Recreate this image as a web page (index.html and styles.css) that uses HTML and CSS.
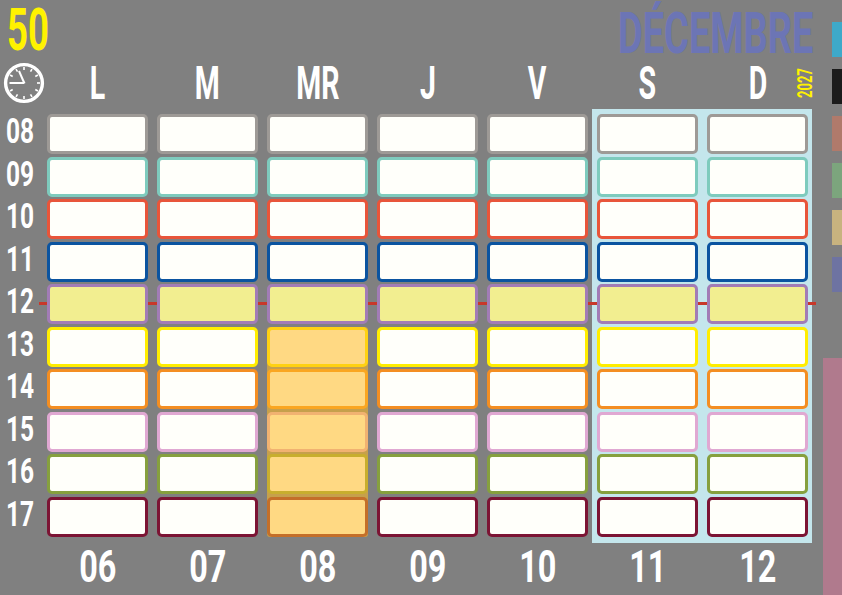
FILE: index.html
```html
<!DOCTYPE html>
<html lang="fr">
<head>
<meta charset="utf-8">
<title>Semaine 50 – Décembre 2027</title>
<link rel="stylesheet" href="styles.css">
</head>
<body>
<div class="page">
  <div class="main">
    <header class="top">
      <span class="week"><span class="sq">50</span></span>
      <span class="month"><span class="sq">DÉCEMBRE</span></span>
    </header>

    <div class="stack">
      <!-- underlay: weekend panel + noon line -->
      <div class="layer">
        <div class="weekend"></div>
        <div class="noon"></div>
      </div>

      <!-- main calendar grid -->
      <div class="cal">
        <div class="clock">
          <svg width="42" height="42" viewBox="0 0 42 42" aria-hidden="true">
            <circle cx="21" cy="21" r="18.4" fill="none" stroke="#fff" stroke-width="3.4"/>
            <g stroke="#fff" stroke-width="1.6" stroke-linecap="butt">
              <line x1="21" y1="8" x2="21" y2="5"/>
              <line x1="27.5" y1="9.7" x2="29" y2="7.1"/>
              <line x1="32.3" y1="14.5" x2="34.9" y2="13"/>
              <line x1="34" y1="21" x2="37" y2="21"/>
              <line x1="32.3" y1="27.5" x2="34.9" y2="29"/>
              <line x1="27.5" y1="32.3" x2="29" y2="34.9"/>
              <line x1="21" y1="34" x2="21" y2="37"/>
              <line x1="14.5" y1="32.3" x2="13" y2="34.9"/>
              <line x1="9.7" y1="27.5" x2="7.1" y2="29"/>
              <line x1="9.7" y1="14.5" x2="7.1" y2="13"/>
              <line x1="14.5" y1="9.7" x2="13" y2="7.1"/>
            </g>
            <line x1="21" y1="21" x2="6.5" y2="21" stroke="#fff" stroke-width="2"/>
            <line x1="21.5" y1="21.5" x2="16" y2="9" stroke="#fff" stroke-width="2"/>
          </svg>
        </div>
        <div class="day"><span class="sq">L</span></div>
        <div class="day"><span class="sq">M</span></div>
        <div class="day"><span class="sq">MR</span></div>
        <div class="day"><span class="sq">J</span></div>
        <div class="day"><span class="sq">V</span></div>
        <div class="day"><span class="sq">S</span></div>
        <div class="day"><span class="sq">D</span></div>

        <div class="row r08"><div class="hour"><span class="sq">08</span></div><div class="cell"></div><div class="cell"></div><div class="cell"></div><div class="cell"></div><div class="cell"></div><div class="cell"></div><div class="cell"></div></div>
        <div class="row r09"><div class="hour"><span class="sq">09</span></div><div class="cell"></div><div class="cell"></div><div class="cell"></div><div class="cell"></div><div class="cell"></div><div class="cell"></div><div class="cell"></div></div>
        <div class="row r10"><div class="hour"><span class="sq">10</span></div><div class="cell"></div><div class="cell"></div><div class="cell"></div><div class="cell"></div><div class="cell"></div><div class="cell"></div><div class="cell"></div></div>
        <div class="row r11"><div class="hour"><span class="sq">11</span></div><div class="cell"></div><div class="cell"></div><div class="cell"></div><div class="cell"></div><div class="cell"></div><div class="cell"></div><div class="cell"></div></div>
        <div class="row r12"><div class="hour"><span class="sq">12</span></div><div class="cell"></div><div class="cell"></div><div class="cell"></div><div class="cell"></div><div class="cell"></div><div class="cell"></div><div class="cell"></div></div>
        <div class="row r13"><div class="hour"><span class="sq">13</span></div><div class="cell"></div><div class="cell"></div><div class="cell"></div><div class="cell"></div><div class="cell"></div><div class="cell"></div><div class="cell"></div></div>
        <div class="row r14"><div class="hour"><span class="sq">14</span></div><div class="cell"></div><div class="cell"></div><div class="cell"></div><div class="cell"></div><div class="cell"></div><div class="cell"></div><div class="cell"></div></div>
        <div class="row r15"><div class="hour"><span class="sq">15</span></div><div class="cell"></div><div class="cell"></div><div class="cell"></div><div class="cell"></div><div class="cell"></div><div class="cell"></div><div class="cell"></div></div>
        <div class="row r16"><div class="hour"><span class="sq">16</span></div><div class="cell"></div><div class="cell"></div><div class="cell"></div><div class="cell"></div><div class="cell"></div><div class="cell"></div><div class="cell"></div></div>
        <div class="row r17"><div class="hour"><span class="sq">17</span></div><div class="cell"></div><div class="cell"></div><div class="cell"></div><div class="cell"></div><div class="cell"></div><div class="cell"></div><div class="cell"></div></div>

        <div class="blank"></div>
        <div class="date"><span class="sq">06</span></div>
        <div class="date"><span class="sq">07</span></div>
        <div class="date"><span class="sq">08</span></div>
        <div class="date"><span class="sq">09</span></div>
        <div class="date"><span class="sq">10</span></div>
        <div class="date"><span class="sq">11</span></div>
        <div class="date"><span class="sq">12</span></div>
      </div>

      <!-- overlay: year label + highlighted wednesday afternoon -->
      <div class="layer">
        <div class="year">2027</div>
        <div class="wed"></div>
      </div>
    </div>
  </div>

  <aside class="side">
    <div class="swatch s-blue"></div>
    <div class="swatch s-black"></div>
    <div class="swatch s-brown"></div>
    <div class="swatch s-green"></div>
    <div class="swatch s-tan"></div>
    <div class="swatch s-slate"></div>
    <div class="strip"></div>
  </aside>
</div>
</body>
</html>
```

FILE: styles.css
```css
* { box-sizing: border-box; }

html, body {
  margin: 0;
  padding: 0;
  background: #808080;
}

body {
  font-family: Roboto, "Liberation Sans", "DejaVu Sans", sans-serif;
  font-weight: 700;
  color: #ffffff;
}

.page {
  width: 842px;
  height: 595px;
  display: flex;
  overflow: hidden;
  background: #808080;
}

.main {
  flex: 0 0 822px;
  display: flex;
  flex-direction: column;
}

/* condensed look: glyphs squeezed horizontally */
.sq {
  display: inline-block;
  white-space: nowrap;
  transform-origin: 50% 50%;
}

/* ---------- top bar ---------- */
.top {
  height: 60px;
  display: flex;
  justify-content: space-between;
  align-items: flex-start;
  padding: 0 9px 0 7px;
}

.week {
  font-size: 59px;
  line-height: 1;
  color: #fff200;
}
.week .sq { transform: scaleX(0.62); transform-origin: 0 50%; }

.month {
  margin-top: 7px;
  font-size: 58px;
  line-height: 0.9;
  color: #6c75b5;
}
.month .sq { transform: scaleX(0.655); transform-origin: 100% 50%; }

/* ---------- calendar ---------- */
.stack {
  display: grid;
}

.stack > .layer,
.stack > .cal {
  grid-area: 1 / 1;
}

.layer,
.cal {
  display: grid;
  grid-template-columns: 38px repeat(7, 101px);
  grid-template-rows: 51.5px repeat(10, 40px) 50px;
  column-gap: 9px;
  row-gap: 2.5px;
}

.row { display: contents; }

.clock {
  align-self: start;
  width: 42px;
  height: 42px;
  margin: 2px 0 0 3px;
}
.clock svg { display: block; }

.day {
  align-self: start;
  text-align: center;
  font-size: 46px;
  line-height: 1;
}
.day .sq { transform: scaleX(0.62); }

.hour {
  align-self: start;
  font-size: 35px;
  line-height: 1;
  padding-left: 6px;
}
.hour .sq { transform: scaleX(0.7); transform-origin: 0 50%; }

.cell {
  border: 3px solid #9d9995;
  border-radius: 5px;
  background: #fffffa;
}

.r08 .cell { border-color: #9e9a96; }
.r09 .cell { border-color: #7ecbbd; }
.r10 .cell { border-color: #e8553a; }
.r11 .cell { border-color: #0b54a0; }
.r12 .cell { border-color: #a27cb6; background: #f2ee90; }
.r13 .cell { border-color: #ffed00; }
.r14 .cell { border-color: #f48e22; }
.r15 .cell { border-color: #e0a8d2; }
.r16 .cell { border-color: #86a03e; }
.r17 .cell { border-color: #7c1434; }

.date {
  align-self: start;
  margin-top: 5px;
  text-align: center;
  font-size: 45px;
  line-height: 1;
}
.date .sq { transform: scaleX(0.72); }

/* underlay */
.weekend {
  grid-column: 7 / 9;
  grid-row: 2 / 12;
  margin: -5px -4px -6px -5px;
  background: #c4e6ec;
}

.noon {
  grid-column: 1 / -1;
  grid-row: 6;
  align-self: center;
  height: 3px;
  margin: 0 -8px 2px 39px;
  background: #c8382a;
}

/* overlay */
.year {
  grid-column: 8;
  grid-row: 1;
  justify-self: end;
  align-self: start;
  margin: -1px -8px 0 0;
  font-size: 21px;
  line-height: 1;
  color: #fff200;
  writing-mode: vertical-rl;
  transform: rotate(180deg) scaleY(0.62);
}

.wed {
  grid-column: 4;
  grid-row: 7 / 12;
  background: rgba(255, 186, 32, 0.55);
  border-radius: 3px;
}

/* ---------- right side legend ---------- */
.side {
  flex: 0 0 20px;
  display: flex;
  flex-direction: column;
  align-items: flex-end;
  gap: 12px;
  padding-top: 22px;
}

.swatch {
  width: 10px;
  height: 35px;
}
.s-blue  { background: #3ea9c9; }
.s-black { background: #1b1b1b; }
.s-brown { background: #b07a6b; }
.s-green { background: #7ca57d; }
.s-tan   { background: #c8b37f; }
.s-slate { background: #6e73a2; }

.strip {
  margin-top: auto;
  width: 19px;
  height: 237px;
  background: #b07a8d;
}
```
